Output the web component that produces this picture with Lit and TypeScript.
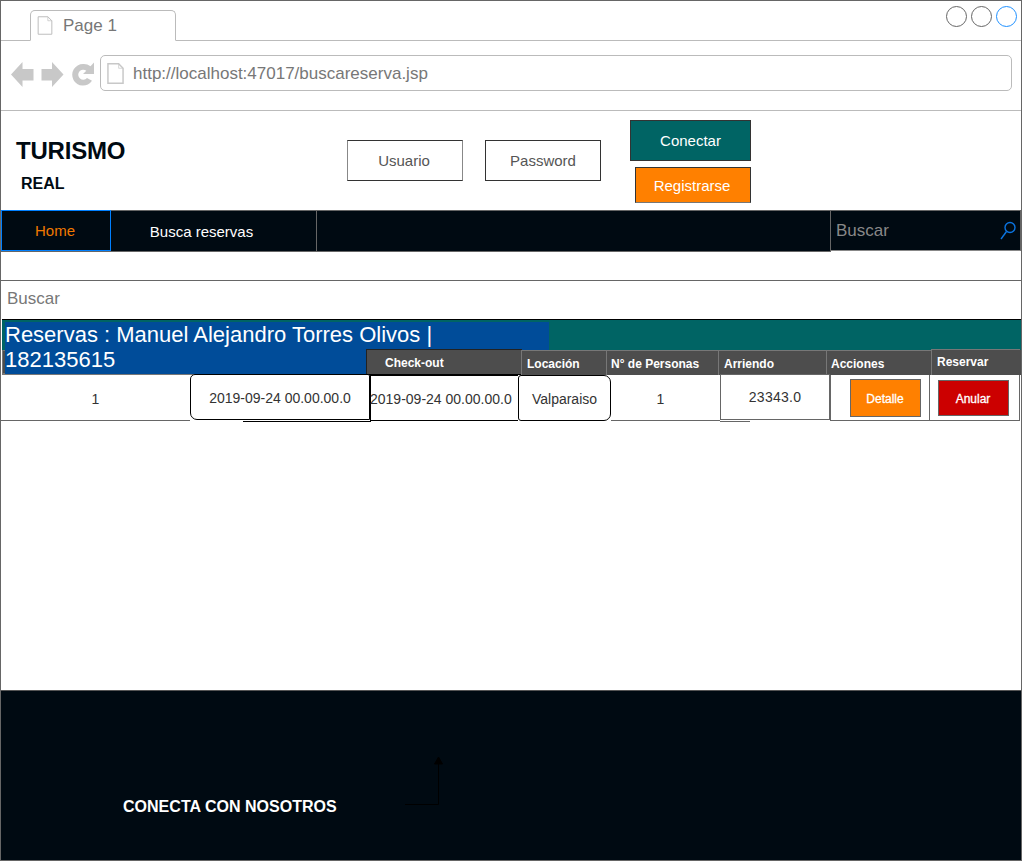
import { LitElement, html, css } from "lit";
import { customElement } from "lit/decorators.js";

const pageIcon = (w: number, h: number, stroke: string, sw: number) => html`<svg width=${w} height=${h} viewBox="0 0 16 20" fill="none" stroke=${stroke} stroke-width=${sw} class="page-ico"><path d="M.8.8H11L15.2 5V19.2H.8Z" /><path d="M11 .8V5H15.2" stroke-width="0.7" /></svg>`;

@customElement("app-root")
export class AppRoot extends LitElement {
  static styles = css`
    :host { display: block; font-family: "Liberation Sans", Arial, sans-serif; }
    * { box-sizing: border-box; }
    .frame { width: 1022px; height: 861px; border: 1px solid #666; border-bottom: 0; background: #fff; display: flex; flex-direction: column; overflow: hidden; position: relative; }

    .tabbar { height: 40px; border-bottom: 1px solid #bbb; flex: none; display: flex; justify-content: space-between; padding-left: 29px; padding-top: 9px; }
    .tab { width: 146px; height: 31px; border: 1px solid #bbb; border-bottom: 1px solid #fff; border-radius: 5px 5px 0 0; display: flex; align-items: center; padding-left: 6px; gap: 10px; font-size: 17px; color: #777; background: #fff; }
    .page-ico { flex: none; display: block; }
    .dots { display: flex; gap: 4px; margin-top: -4px; padding-right: 4px; height: 21px; }
    .dot { width: 21px; height: 21px; border-radius: 50%; border: 1px solid #666; }
    .dot.on { border-color: #1e90ff; }

    .addr { height: 70px; flex: none; border-bottom: 1px solid #bbb; display: flex; padding: 14px 9px 0 10px; gap: 5px; }
    .nav-ico { display: block; margin-top: 5px; flex: none; }
    .url { width: 912px; height: 36px; border: 1px solid #bbb; border-radius: 5px; display: flex; align-items: center; padding-left: 6px; gap: 9px; font-size: 17px; color: #777; }
    .url span { padding-top: 1px; }

    .head { height: 99px; flex: none; position: relative; display: flex; }
    .brand { width: 346px; padding: 26px 0 0 15px; color: #000a12; font-weight: 700; }
    .brand .t { font-size: 24px; line-height: 28px; letter-spacing: -0.2px; }
    .brand .r { font-size: 16px; line-height: 18px; margin: 10px 0 0 5px; }
    .login { display: flex; padding-top: 29px; gap: 22px; }
    .field { width: 116px; height: 41px; border: 1px solid #333; display: flex; align-items: center; justify-content: center; font-size: 15px; color: #555; }
    .field.u { border-left-color: #888; border-right-color: #888; padding-right: 2px; }
    .btns { margin-left: 29px; padding-top: 9px; display: flex; flex-direction: column; align-items: flex-end; gap: 6px; }
    .btn { display: flex; align-items: center; justify-content: center; color: #fff; font-size: 15px; border: 1px solid #333; }
    .btn.c { width: 121px; height: 41px; background: #006464; }
    .btn.r { width: 116px; height: 36px; background: #ff8000; border-bottom-color: #777; padding-right: 2px; }

    .navbar { height: 42px; flex: none; display: flex; position: relative; }
    .menu { width: 830px; height: 42px; flex: none; background: #000a12; border-top: 1px solid #666; border-bottom: 1px solid #666; border-right: 1px solid #666; display: flex; }
    .home { width: 110px; height: 41px; margin-top: -1px; border: 1px solid #0080ff; color: #f07800; font-size: 15px; display: flex; align-items: center; justify-content: center; padding-right: 2px; }
    .link { width: 206px; border-right: 1px solid #666; color: #fff; font-size: 15px; display: flex; align-items: center; justify-content: center; padding-top: 1px; padding-right: 24px; }
    .search { flex: 1; height: 41px; background: #000a12; border-top: 1px solid #666; border-bottom: 1px solid #888; border-right: 1px solid #666; display: flex; align-items: center; justify-content: space-between; padding: 0 4px 0 5px; color: #888; font-size: 17px; }

    .filter { margin-top: 28px; height: 39px; flex: none; border-top: 1px solid #666; padding: 8px 0 0 6px; font-size: 17px; line-height: 20px; color: #777; }

    .board { position: relative; flex: none; height: 103px; }
    .band { margin-left: 1px; height: 31px; background: #006464; border-top: 1px solid #000; }
    .title { position: absolute; left: 4px; top: 3px; width: 544px; height: 52px; z-index: 1; color: #fff; background: #004c99; font-size: 22px; line-height: 25px; }
    .thead { display: grid; grid-template-columns: 364px 155px 85px 112px 108px 105px 89px; margin-left: 1px; height: 25px; background: #4d4d4d; }
    .th { position: relative; z-index: 2; background: #4d4d4d; color: #fff; font-size: 12px; font-weight: 700; border: 1px solid #777; border-bottom: 0; border-right: 0; display: flex; align-items: center; padding: 2px 0 0 5px; white-space: nowrap; }
    .th.tight { padding-left: 4px; }
    .th.first { z-index: 0; border-bottom: 2px solid #777; }
    .th.out { border: 1px solid #222; border-bottom-color: #000; margin-top: -1px; margin-right: -1px; padding: 1px 0 0 18px; }
    .th.res { margin-top: -1px; padding: 0 0 1px 5px; }
    .row { display: grid; grid-template-columns: 189px 180px 148px 93px 109px 110px 100px 90px; height: 46px; font-size: 14px; color: #333; position: relative; z-index: 3; }
    .td { display: flex; align-items: center; justify-content: center; background: #fff; border-bottom: 1px solid #666; padding-top: 2px; white-space: nowrap; }
    .td.d1 { border: 1px solid #000; border-radius: 5px 2px 0 7px; margin-top: -1px; height: 46px; padding-top: 1px; }
    .td.d2 { border-left: 1px solid #000; border-top: 1px solid #000; border-bottom-color: #000; padding-right: 7px; justify-content: flex-start; text-indent: -1px; }
    .td.d3 { border: 1px solid #000; border-radius: 3px 7px 7px 3px; }
    .td.one { padding-right: 10px; }
    .td.rent { border: 1px solid #666; margin-top: -1px; height: 46px; padding: 0; letter-spacing: 0.25px; }
    .td.act { border-left: 1px solid #666; border-right: 1px solid #666; padding: 1px 0 0 10px; }
    .td.act2 { padding: 1px 3px 0 0; border-right: 1px solid #666; }
    .cta { width: 71px; height: 38px; color: #fff; font-size: 12px; display: flex; align-items: center; justify-content: center; border: 1px solid #666; -webkit-text-stroke: 0.3px #fff; padding-top: 1px; }
    .cta.o { background: #ff8000; }
    .cta.x { background: #cc0000; height: 36px; }
    .under { position: absolute; height: 1px; bottom: -1px; }
    .under.a { left: 242px; width: 128px; background: #000; }
    .under.b { left: 719px; width: 30px; background: #666; }

    .spacer { flex: 1; }
    .foot { height: 171px; flex: none; background: #000a12; border-top: 1px solid #555; border-bottom: 1px solid #666; position: relative; padding: 106px 0 0 123px; color: #fff; font-size: 16px; font-weight: 700; line-height: 20px; margin-left: -1px; margin-right: -1px; letter-spacing: 0.02px; }
    .arrow { position: absolute; left: 404px; top: 60px; }
  `;

  render() {
    return html`<div class="frame">
      <div class="tabbar">
        <div class="tab">${pageIcon(16, 19, "#bbb", 1)}<span>Page 1</span></div>
        <div class="dots"><div class="dot"></div><div class="dot"></div><div class="dot on"></div></div>
      </div>
      <div class="addr">
        <svg class="nav-ico" width="84" height="28" viewBox="0 0 84 28" fill="#c8c8c8">
          <path d="M0 14.500 11.500 2V9H22.500V20.500H11.500V27Z" />
          <path d="M52.500 14.500 41 2V9H30.500V20.500H41V27Z" />
          <path d="M72 4a10.800 10.800 0 1 0 9 16.800l-5-2.800a5 5 0 1 1-.7-7.300l-3.300 3.400H83V2.500l-3.500 3.800A10.800 10.800 0 0 0 72 4Z" />
        </svg>
        <div class="url">${pageIcon(17, 21, "#c8c8c8", 1.4)}<span>http://localhost:47017/buscareserva.jsp</span></div>
      </div>
      <div class="head">
        <div class="brand"><div class="t">TURISMO</div><div class="r">REAL</div></div>
        <div class="login">
          <div class="field u">Usuario</div>
          <div class="field">Password</div>
        </div>
        <div class="btns">
          <div class="btn c">Conectar</div>
          <div class="btn r">Registrarse</div>
        </div>
      </div>
      <div class="navbar">
        <div class="menu">
          <div class="home">Home</div>
          <div class="link">Busca reservas</div>
        </div>
        <div class="search"><span>Buscar</span>
          <svg width="16" height="19" viewBox="0 0 16 19" fill="none" stroke="#0a74e0" stroke-width="1.4"><circle cx="10" cy="6.500" r="5" /><path d="M6.500 10.500 1 18" /></svg>
        </div>
      </div>
      <div class="filter">Buscar</div>
      <div class="board">
        <div class="band"></div>
        <div class="thead">
          <div class="th first"></div>
          <div class="th out">Check-out</div>
          <div class="th">Locación</div>
          <div class="th tight">N° de Personas</div>
          <div class="th">Arriendo</div>
          <div class="th tight">Acciones</div>
          <div class="th res">Reservar</div>
        </div>
        <div class="row">
          <div class="td">1</div>
          <div class="td d1">2019-09-24 00.00.00.0</div>
          <div class="td d2">2019-09-24 00.00.00.0</div>
          <div class="td d3">Valparaiso</div>
          <div class="td one">1</div>
          <div class="td rent">23343.0</div>
          <div class="td act"><div class="cta o">Detalle</div></div>
          <div class="td act2"><div class="cta x">Anular</div></div>
          <div class="under a"></div>
          <div class="under b"></div>
        </div>
        <div class="title">Reservas : Manuel Alejandro Torres Olivos |<br />182135615</div>
      </div>
      <div class="spacer"></div>
      <div class="foot">CONECTA CON NOSOTROS
        <svg class="arrow" width="42" height="55" viewBox="0 0 42 55" fill="none" stroke="#000"><path d="M1 53.500H34.500V12" /><path d="M34.500 6 38.500 13H30.500Z" fill="#000" /></svg>
      </div>
    </div>`;
  }
}
